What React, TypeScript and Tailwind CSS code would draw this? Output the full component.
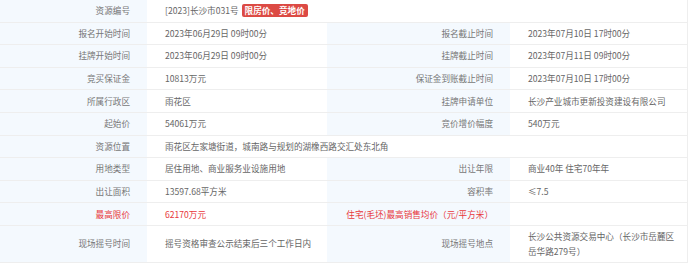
import React from 'react';

type Cell = { text?: string; red?: boolean; tag?: string };
type Row = { l1: Cell; v1: Cell; l2?: Cell; v2?: Cell; tall?: boolean };

const rows: Row[] = [
  { l1: { text: '资源编号' }, v1: { text: '[2023]长沙市031号', tag: '限房价、竞地价' } },
  { l1: { text: '报名开始时间' }, v1: { text: '2023年06月29日 09时00分' }, l2: { text: '报名截止时间' }, v2: { text: '2023年07月10日 17时00分' } },
  { l1: { text: '挂牌开始时间' }, v1: { text: '2023年06月29日 09时00分' }, l2: { text: '挂牌截止时间' }, v2: { text: '2023年07月11日 09时00分' } },
  { l1: { text: '竞买保证金' }, v1: { text: '10813万元' }, l2: { text: '保证金到账截止时间' }, v2: { text: '2023年07月10日 17时00分' } },
  { l1: { text: '所属行政区' }, v1: { text: '雨花区' }, l2: { text: '挂牌申请单位' }, v2: { text: '长沙产业城市更新投资建设有限公司' } },
  { l1: { text: '起始价' }, v1: { text: '54061万元' }, l2: { text: '竞价增价幅度' }, v2: { text: '540万元' } },
  { l1: { text: '资源位置' }, v1: { text: '雨花区左家塘街道，城南路与规划的湖橡西路交汇处东北角' } },
  { l1: { text: '用地类型' }, v1: { text: '居住用地、商业服务业设施用地' }, l2: { text: '出让年限' }, v2: { text: '商业40年 住宅70年年' } },
  { l1: { text: '出让面积' }, v1: { text: '13597.68平方米' }, l2: { text: '容积率' }, v2: { text: '≤7.5' } },
  { l1: { text: '最高限价', red: true }, v1: { text: '62170万元', red: true }, l2: { text: '住宅(毛坯)最高销售均价（元/平方米）', red: true }, v2: { text: '' } },
  { l1: { text: '现场摇号时间' }, v1: { text: '摇号资格审查公示结束后三个工作日内' }, l2: { text: '现场摇号地点' }, v2: { text: '长沙公共资源交易中心（长沙市岳麓区岳华路279号）' }, tall: true },
];

const font = { fontFamily: '"Noto Sans CJK SC", "Noto Sans", sans-serif' };

export default function App() {
  return (
    <div className="w-[692px] h-[263px] bg-white overflow-hidden text-[8.6px] leading-[15px]" style={font}>
      <div className="w-[688px] border-r border-[#eee] grid grid-cols-[147px_180px_183px_178px]">
        {rows.map((r, i) => {
          const h = r.tall ? 'h-[37px]' : 'h-[22.6px]';
          const label = 'flex items-center justify-end pr-[17px] bg-[#f4f9fe] border-b border-[#eee] ' + h;
          const value = 'flex items-center pl-[18px] pr-2 border-b border-[#eee] ' + h;
          const color = (c?: Cell) => (c?.red ? 'text-[#e8373c]' : 'text-[#666]');
          return (
            <React.Fragment key={i}>
              <div className={label + ' ' + (r.l1.red ? 'text-[#e8373c]' : 'text-[#777]')}>{r.l1.text}</div>
              {r.l2 ? (
                <>
                  <div className={value + ' ' + color(r.v1)}>{r.v1.text}</div>
                  <div className={label + ' whitespace-nowrap ' + (r.l2.red ? 'text-[#e8373c]' : 'text-[#777]')}>{r.l2.text}</div>
                  <div className={value + ' ' + color(r.v2)}>{r.v2?.text}</div>
                </>
              ) : (
                <div className={value + ' col-span-3 ' + color(r.v1)}>
                  <span>{r.v1.text}</span>
                  {r.v1.tag && (
                    <span className="ml-[3px] px-[3px] h-[13px] leading-[13px] rounded-[2px] bg-[#dc4a44] text-white font-bold">
                      {r.v1.tag}
                    </span>
                  )}
                </div>
              )}
            </React.Fragment>
          );
        })}
      </div>
    </div>
  );
}
